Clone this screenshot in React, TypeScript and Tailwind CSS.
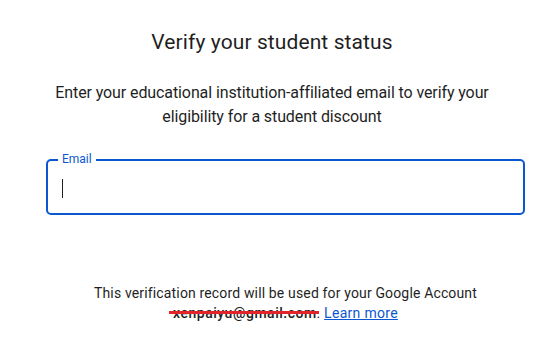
import React from "react";

export default function App() {
  return (
    <div
      className="w-[551px] h-[359px] bg-white overflow-hidden"
      style={{ fontFamily: "Roboto, 'Noto Sans', Arial, sans-serif" }}
    >
      <div className="flex flex-col items-center pt-[28px] pr-[7px]">
        <h1 className="text-[21px] leading-[28px] text-[#1f1f1f] font-normal tracking-[0.1px]">
          Verify your student status
        </h1>
        <p className="mt-[25px] text-[16px] leading-[24px] text-[#1f1f1f] text-center w-[460px] tracking-[-0.1px]">
          Enter your educational institution-affiliated email to verify your eligibility for a student discount
        </p>
      </div>
      <div className="pl-[46px] pr-[26px] mt-[30px]">
        <div className="relative h-[56px] border-2 border-[#0b57d0] rounded-[5px] flex items-center pl-[14px]">
          <span className="absolute left-[10px] top-[-9px] bg-white px-[4px] text-[12px] leading-[14px] text-[#0b57d0]">
            Email
          </span>
          <span className="block w-[1px] h-[19px] bg-[#1f1f1f] mt-[2px]" />
        </div>
      </div>
      <div className="pl-[46px] pr-[26px] mt-[68px] text-center text-[14px] leading-[20px] text-[#1f1f1f] tracking-[0.15px]">
        <div>This verification record will be used for your Google Account</div>
        <div>
          <span className="relative inline-block font-medium tracking-[0.5px]">
            xenpaiyu@gmail.com
            <span className="absolute left-[-4px] right-[-2px] top-[8px] h-[3px] bg-[#e3242b]" />
          </span>
          .{" "}
          <a className="text-[#0b57d0] underline tracking-[0.3px]" href="#">
            Learn more
          </a>
        </div>
      </div>
    </div>
  );
}
